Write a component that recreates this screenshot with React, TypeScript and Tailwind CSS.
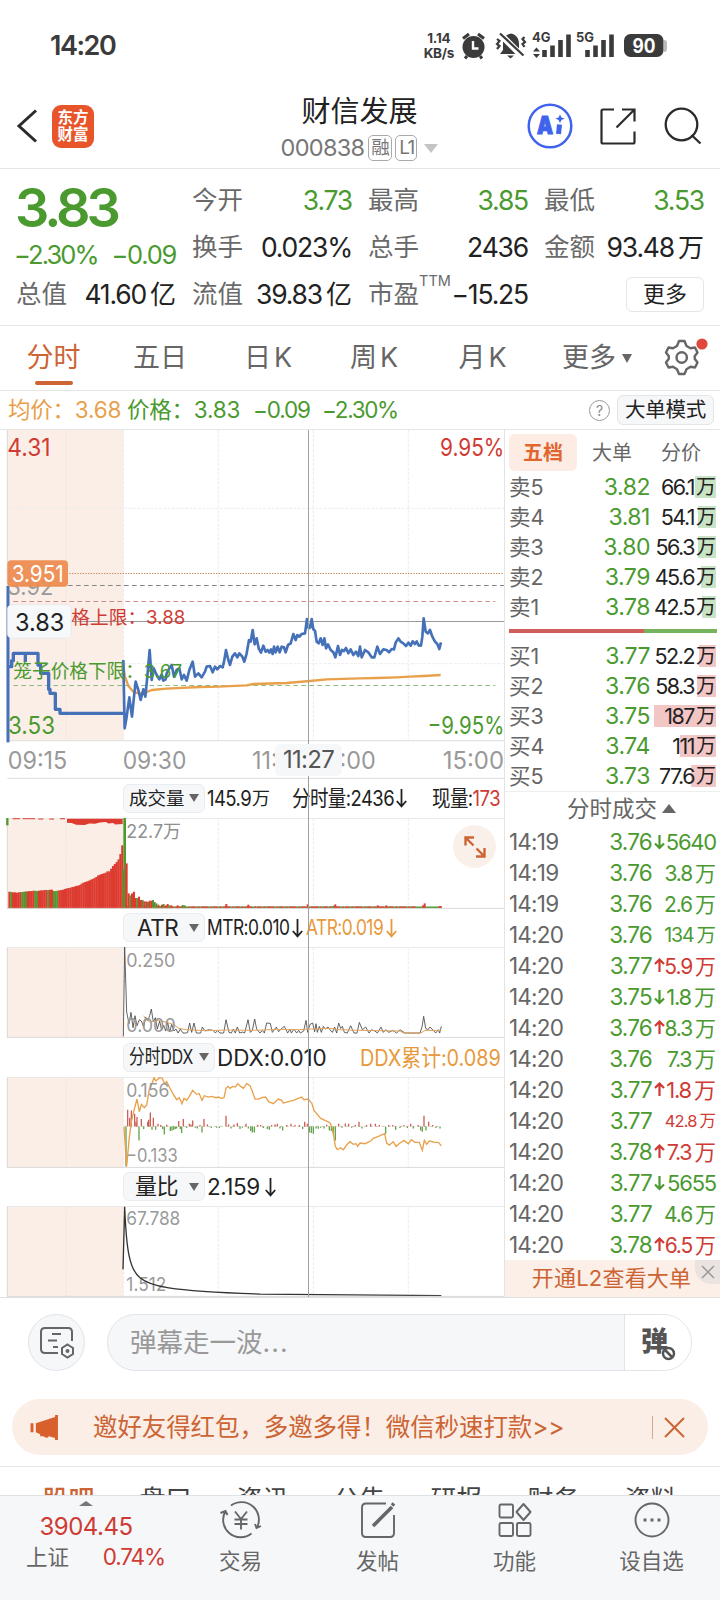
import type { ReactNode } from 'react';

const GREEN = '#4a9a2f';
const RED = '#cf3b34';
const BLUE = '#4471b8';
const ORANGE = '#e8a04a';

interface Level {
  label: string;
  price: string;
  volume: string;
  bar: number;
}

const SELLS: Level[] = [
  { label: '卖5', price: '3.82', volume: '66.1', bar: 21 },
  { label: '卖4', price: '3.81', volume: '54.1', bar: 18 },
  { label: '卖3', price: '3.80', volume: '56.3', bar: 18 },
  { label: '卖2', price: '3.79', volume: '45.6', bar: 15 },
  { label: '卖1', price: '3.78', volume: '42.5', bar: 14 },
];

const BUYS: Level[] = [
  { label: '买1', price: '3.77', volume: '52.2', bar: 17 },
  { label: '买2', price: '3.76', volume: '58.3', bar: 19 },
  { label: '买3', price: '3.75', volume: '187', bar: 62 },
  { label: '买4', price: '3.74', volume: '111', bar: 36 },
  { label: '买5', price: '3.73', volume: '77.6', bar: 25 },
];

interface Trade {
  time: string;
  price: string;
  dir?: 'up' | 'down';
  volume: string;
  unit?: string;
  size?: string;
  red?: boolean;
}

const TRADES: Trade[] = [
  { time: '14:19', price: '3.76', dir: 'down', volume: '5640', size: 'text-[22px]' },
  { time: '14:19', price: '3.76', volume: '3.8', unit: '万' },
  { time: '14:19', price: '3.76', volume: '2.6', unit: '万' },
  { time: '14:20', price: '3.76', volume: '134', unit: '万', size: 'text-[19.5px]' },
  { time: '14:20', price: '3.77', dir: 'up', volume: '5.9', unit: '万', red: true },
  { time: '14:20', price: '3.75', dir: 'down', volume: '1.8', unit: '万', size: 'text-[22px]' },
  { time: '14:20', price: '3.76', dir: 'up', volume: '8.3', unit: '万' },
  { time: '14:20', price: '3.76', volume: '7.3', unit: '万', size: 'text-[21.5px]' },
  { time: '14:20', price: '3.77', dir: 'up', volume: '1.8', unit: '万', size: 'text-[22px]', red: true },
  { time: '14:20', price: '3.77', volume: '42.8', unit: '万', size: 'text-[16.5px]', red: true },
  { time: '14:20', price: '3.78', dir: 'up', volume: '7.3', unit: '万', size: 'text-[21.5px]', red: true },
  { time: '14:20', price: '3.77', dir: 'down', volume: '5655', size: 'text-[22px]' },
  { time: '14:20', price: '3.77', volume: '4.6', unit: '万' },
  { time: '14:20', price: '3.78', dir: 'up', volume: '6.5', unit: '万', red: true },
];

// Chart coordinates are in thirds of a pixel
const PRICE_LINE =
  '370,720 374,925 380,890 388,832 396,890 402,830 407,785 415,810 422,840 430,808 436,830 442,770 449,690 455,780 461,745 470,765 478,778 484,765 490,782 497,778 500,760 508,745 515,735 522,770 530,750 538,745 545,778 552,765 560,782 568,750 578,725 585,770 595,760 605,772 615,755 620,740 630,738 638,757 645,740 652,748 660,738 668,742 672,725 678,690 685,720 690,735 697,710 705,700 712,712 718,700 727,710 733,725 740,700 747,660 752,665 758,630 764,673 770,655 776,685 783,698 790,677 797,695 803,690 808,698 813,688 818,702 822,680 827,697 833,680 839,697 845,680 852,682 857,697 864,675 872,670 880,642 887,660 892,645 898,650 905,642 915,640 921,597 926,625 931,622 935,597 940,628 945,632 950,665 956,670 962,655 968,675 973,655 978,685 984,673 992,690 1000,697 1006,712 1014,678 1020,705 1026,690 1032,693 1038,684 1045,700 1052,688 1060,705 1068,695 1075,708 1080,680 1085,712 1095,690 1105,697 1115,712 1123,712 1132,680 1140,702 1150,688 1160,690 1167,697 1175,687 1182,688 1187,668 1195,655 1202,665 1210,670 1218,678 1225,668 1232,677 1238,664 1245,672 1250,664 1256,676 1263,677 1267,650 1271,595 1277,635 1284,640 1290,630 1297,650 1305,665 1312,672 1318,687 1323,667';
const AVG_LINE =
  '370,735 375,770 385,798 400,815 415,820 435,818 455,810 500,806 600,801 655,800 740,796 760,792 860,789 930,783 980,778 1080,775 1130,774 1190,772 1230,770 1270,768 1322,765';
const AUCTION_PATH =
  'M26,740 H35 V722 H40 V700 H114 V735 H122 V760 H146 V808 H150 V820 H166 V868 H180 V880 H370 M76,700 V726';

const MTR_LINE =
  '370,268 374,0 380,195 387,230 393,196 399,242 405,206 411,236 418,218 424,222 431,240 437,210 443,222 449,206 454,186 460,225 466,212 472,246 479,222 485,250 491,235 497,252 503,226 509,255 515,232 522,252 528,246 534,258 541,246 549,258 558,258 563,256 569,228 575,256 582,228 589,258 602,258 607,240 615,252 625,248 640,250 646,258 653,250 660,258 671,258 678,218 687,256 694,258 700,246 706,258 712,240 719,258 728,255 734,258 744,218 751,256 757,250 764,216 770,246 780,258 787,250 793,258 800,228 811,229 817,256 829,240 836,254 843,246 853,238 863,258 870,246 874,258 882,246 890,258 896,250 901,258 911,252 918,220 923,256 930,232 938,228 944,254 948,230 952,256 958,238 964,256 970,238 976,246 984,240 990,248 997,256 1004,240 1010,258 1016,228 1022,244 1027,238 1033,256 1042,258 1052,236 1062,258 1071,258 1078,226 1087,248 1097,240 1107,258 1115,248 1125,252 1132,258 1143,240 1150,256 1157,248 1167,256 1178,250 1190,258 1200,248 1215,258 1260,258 1266,240 1271,208 1277,244 1284,248 1290,240 1300,250 1307,258 1315,248 1319,258 1324,238';
const ATR_LINE =
  '431,206 440,220 455,224 475,220 500,226 520,232 537,244 560,248 620,251 680,249 760,250 830,247 900,248 930,246 990,244 1020,248 1080,250 1200,252 1210,258 1262,258 1275,250 1324,250';
const DDX_SUM_LINE =
  '372,150 380,268 388,180 395,130 402,100 411,66 418,104 424,82 433,92 440,84 448,36 455,22 462,2 468,12 478,2 487,4 494,20 500,14 508,30 518,48 530,68 538,62 546,80 552,64 560,70 568,58 578,40 590,52 598,50 606,70 613,56 625,60 635,58 648,62 655,60 664,64 672,62 678,34 684,28 690,34 698,28 706,30 713,20 722,28 730,34 740,20 750,26 756,40 765,66 775,66 785,62 797,60 806,74 820,80 835,66 845,70 850,78 865,74 880,70 905,60 912,68 925,66 936,80 942,100 962,124 980,132 990,138 996,150 1000,170 1006,208 1012,218 1022,212 1030,218 1040,204 1050,194 1060,202 1068,200 1073,208 1080,198 1095,200 1112,192 1120,184 1130,180 1140,176 1154,170 1160,198 1168,204 1180,194 1188,208 1200,198 1212,190 1225,200 1234,188 1245,196 1258,196 1267,220 1273,190 1280,202 1288,192 1305,196 1315,196 1324,206';

// [x, height], negative heights hang under the zero line
const DDX_BARS: [number, number][] = [
  [378, -120], [383, 50], [389, 26], [394, 48], [404, 38], [408, 14], [411, 28], [417, -42], [424, 22], [431, -8], [443, 14], [446, 20], [451, 42], [456, -10], [460, 26], [467, -10], [474, 8], [482, 4], [488, -8], [493, -24], [500, 5], [511, -14], [516, -12], [521, -10], [526, -8], [530, -6], [536, 16], [541, -8], [545, -20], [550, 22], [560, -5], [568, 8], [573, 6], [578, 18], [586, -4], [592, -6], [600, 4], [606, -18], [612, 22], [622, 6], [634, -5], [650, -4], [658, -5], [678, 32], [686, 6], [693, -6], [702, 6], [712, 10], [720, -8], [727, -4], [738, 8], [745, -6], [752, -14], [757, -18], [763, -18], [773, 5], [782, 4], [790, -5], [802, -8], [808, -10], [815, 4], [825, 6], [832, 8], [840, -6], [848, -12], [860, 4], [873, 8], [885, 4], [898, 4], [908, -8], [914, 14], [922, 8], [928, -18], [934, -20], [940, -22], [948, -6], [955, -7], [962, -4], [972, -6], [980, 5], [988, -12], [994, -14], [1000, -22], [1006, -42], [1016, 8], [1026, -4], [1036, 9], [1046, 8], [1055, -4], [1066, 4], [1077, 14], [1086, -6], [1100, 4], [1112, 8], [1126, 8], [1138, 4], [1157, -22], [1166, 4], [1178, 4], [1187, -10], [1200, -5], [1212, 4], [1222, -5], [1232, 8], [1240, -6], [1254, 4], [1262, -12], [1267, -16], [1272, 32], [1278, -12], [1286, 14], [1298, 4], [1308, -5], [1320, -6],
];

// Opening auction volume: top edge of each bar
const AUCTION_VOLUME = [
  221, 222, 223, 223, 224, 223, 222, 222, 221, 220, 220, 219, 219, 218, 218, 219, 218, 217, 217, 216, 216, 216, 215, 215, 219, 219, 218, 217, 216, 215, 213, 211, 210, 209, 207, 206, 204, 203, 201, 197, 194, 192, 190, 188, 185, 183, 180, 177, 172, 170, 168, 166, 164, 160, 160, 152, 144, 138, 132, 124, 108, 82,
];
const AUCTION_GREEN = [1, 7, 8, 9, 14, 15, 21, 24, 25, 26];
const OPEN_VOLUME: [number, number, boolean][] = [
  [383, 226, false], [388, 232, true], [393, 226, false], [399, 221, false], [404, 240, false], [409, 240, true], [414, 236, false], [420, 246, false], [425, 246, true], [430, 250, false], [436, 250, false], [441, 252, true], [446, 248, false], [451, 248, false], [456, 246, true], [461, 252, true], [466, 256, true], [472, 260, false], [477, 264, true], [483, 260, false], [488, 258, true], [494, 262, false], [500, 258, false], [505, 262, true], [511, 262, false], [530, 262, false], [545, 261, true], [551, 262, true], [676, 258, false], [742, 260, false], [920, 259, false], [997, 263, true], [1003, 259, false], [1130, 262, false], [1156, 262, false], [1266, 262, false], [1271, 256, false],
];

/* Svg text stretched to an exact width */
function Label({ x, y, w, size, fill, children }: { x: number; y: number; w: number; size: number; fill: string; children: ReactNode }) {
  return (
    <text x={x} y={y} fontSize={size} fill={fill} textLength={w} lengthAdjust="spacingAndGlyphs">
      {children}
    </text>
  );
}

function Grid({ top, bottom }: { top: number; bottom: number }) {
  return (
    <>
      <rect x={22} y={top} width={348} height={bottom - top} fill="#fbeee7" />
      <path d={`M22,${top} V${bottom}`} stroke="#ddd5d3" strokeWidth={3} />
      <path
        d={`M199,${top} V${bottom} M370,${top} V${bottom} M655,${top} V${bottom} M940,${top} V${bottom} M1225,${top} V${bottom}`}
        stroke="#e6e4e4"
        strokeWidth={2}
        strokeDasharray="10 4"
      />
    </>
  );
}

function MainChart() {
  return (
    <svg className="block h-[311px] w-[504px] overflow-visible" viewBox="0 30 1512 933" fill="none">
      <Grid top={30} bottom={963} />
      <path d="M22,265 H1512 M22,731 H1512" stroke="#ececec" strokeWidth={3} strokeDasharray="9 4" />
      <path d="M22,962 H1512" stroke="#e3e3e3" strokeWidth={4} />
      <path d="M200,460.5 H1512" stroke="#c98a5c" strokeWidth={3} strokeDasharray="4 4" />
      <path d="M36,496.500 H1512" stroke="#858585" strokeWidth={3} strokeDasharray="14 10" />
      <path d="M40,544.500 H1486" stroke="#cf8a8a" strokeWidth={3} strokeDasharray="14 10" />
      <path d="M40,796.500 H1486" stroke="#8dba80" strokeWidth={3} strokeDasharray="14 10" />
      <path d="M210,604.500 H1512" stroke="#999" strokeWidth={3} />
      <polyline points={AVG_LINE} stroke={ORANGE} strokeWidth={7} strokeLinejoin="round" />
      <path d={AUCTION_PATH} stroke={BLUE} strokeWidth={10} strokeLinejoin="round" />
      <path d="M24,498 V967" stroke={BLUE} strokeWidth={9} />
      <polyline points={PRICE_LINE} stroke={BLUE} strokeWidth={8} strokeLinejoin="round" />
      <Label x={40} y={773} w={506} size={57} fill={GREEN}>笼子价格下限：3.67</Label>
      <Label x={214} y={611} w={342} size={56} fill={RED}>格上限：3.88</Label>
      <Label x={22} y={107} w={130} size={72} fill={RED}>4.31</Label>
      <Label x={1320} y={107} w={193} size={72} fill={RED}>9.95%</Label>
      <Label x={24} y={941} w={141} size={72} fill={GREEN}>3.53</Label>
      <Label x={1283} y={941} w={230} size={72} fill={GREEN}>−9.95%</Label>
      <Label x={22} y={524} w={138} size={68} fill="#999">3.92</Label>
      <rect x={22} y={421} width={182} height={79} rx={12} fill="#ee8c50" fillOpacity={0.94} />
      <Label x={35} y={486} w={156} size={70} fill="#fff">3.951</Label>
      <rect x={22} y={554} width={192} height={101} rx={14} fill="#f6f8fa" stroke="#e2e5ea" strokeWidth={2} />
      <Label x={45} y={632} w={148} size={74} fill="#222">3.83</Label>
    </svg>
  );
}

function TimeAxis() {
  return (
    <svg className="block h-[38px] w-[504px] overflow-visible" viewBox="0 963 1512 114" fill="none">
      <Label x={23} y={1046} w={179} size={74} fill="#999">09:15</Label>
      <Label x={368} y={1046} w={191} size={74} fill="#999">09:30</Label>
      <Label x={756} y={1046} w={371} size={74} fill="#999">11:30/13:00</Label>
      <Label x={1328} y={1046} w={184} size={74} fill="#999">15:00</Label>
      <path d="M22,1075 H1512" stroke="#ddd" strokeWidth={3} />
    </svg>
  );
}

function Indicator({ header, children }: { header: ReactNode; children: ReactNode }) {
  return (
    <div>
      <div className="flex h-[38.75px] items-center pl-[123px] whitespace-nowrap">{header}</div>
      <svg className="block h-[90.75px] w-[504px] overflow-hidden" viewBox="0 0 1512 272" fill="none">
        <Grid top={0} bottom={272} />
        <path d="M22,1.5 H1512" stroke="#e9e9e9" strokeWidth={3} />
        {children}
        <path d="M22,271 H1512" stroke="#dadada" strokeWidth={3} />
      </svg>
    </div>
  );
}

function Picker({ width, children }: { width: string; children: ReactNode }) {
  return (
    <div className={`flex h-[29px] shrink-0 items-center justify-between rounded-md border border-[#e9ecf0] bg-[#f6f7f9] px-[5px] text-[#222] ${width}`}>
      {children}
      <svg className="h-2 w-[10px] shrink-0" viewBox="0 0 10 8"><path d="M0,0 H10 L5,8 Z" fill="#666" /></svg>
    </div>
  );
}

/* Condensed run of text: fixed box, glyphs scaled down to fit it */
function Squeeze({ width, scale, children }: { width: string; scale: string; children: ReactNode }) {
  return (
    <span className={`inline-block shrink-0 ${width}`}>
      <span className={`inline-block origin-left ${scale}`}>{children}</span>
    </span>
  );
}

function DownArrow() {
  return (
    <svg className="h-5 w-[11px] shrink-0" viewBox="0 0 11 20" fill="none" stroke="currentColor" strokeWidth={1.8}>
      <path d="M5.5,1 V18 M0.8,13 L5.5,18.3 L10.2,13" />
    </svg>
  );
}

function VolumeChart() {
  return (
    <>
      {AUCTION_VOLUME.map((top, i) => (
        <rect key={i} x={25 + i * 5.55} y={top} width={6.5} height={272 - top} fill={AUCTION_GREEN.includes(i) ? '#5b9232' : '#dd3b30'} />
      ))}
      <path d="M201,2 H368 V18 L345,19 L340,15 L325,16 L318,12 L300,13 L285,17 L268,16 L254,21 L228,20 L215,15 L201,14 Z" fill="#dd3b30" />
      <path d="M38,2 H60 M68,2 H105 M115,3 H130 M148,3 H162 M180,2 H195" stroke="#dd3b30" strokeWidth={3} />
      <path d="M22,0 V22" stroke={GREEN} strokeWidth={7} />
      <path d="M374,0 V272" stroke="#4d9a2e" strokeWidth={8} />
      <rect x={366} y={154} width={8} height={118} fill="#77822f" />
      <rect x={376} y={136} width={7} height={136} fill="#dd3b30" />
      <path d="M370,268 H1325" stroke={GREEN} strokeWidth={5} />
      <path d="M375,268 H1250" stroke="#dd3b30" strokeWidth={5} strokeDasharray="14 5 7 4 22 6 5 3" />
      {OPEN_VOLUME.map(([x, top, up]) => (
        <rect key={x} x={x} y={top} width={6} height={272 - top} fill={up ? '#5b9232' : '#dd3b30'} />
      ))}
      <path d="M1316,267 H1325" stroke="#dd3b30" strokeWidth={6} />
      <Label x={379} y={60} w={164} size={56} fill="#8f8f8f">22.7万</Label>
    </>
  );
}

function Row({ row, tint }: { row: Level; tint: string }) {
  return (
    <div className="flex h-[30px] items-center pt-px pr-1 pl-1">
      <span className="w-[60px] text-[21.5px] text-[#666]">{row.label}</span>
      <span className="w-[81px] text-right text-[23px] tracking-[-0.02em] text-[#4a9a2f]">{row.price}</span>
      <div className="relative flex h-[22px] flex-1 items-center justify-end text-[21.5px] text-[#222]">
        <div className={`absolute top-0 right-0 h-full ${tint}`} style={{ width: row.bar }} />
        <span className="relative tracking-[-0.07em]">{row.volume}</span>
        <span className="relative ml-[2px] text-[20px]">万</span>
      </div>
    </div>
  );
}

function TradeRow({ trade }: { trade: Trade }) {
  return (
    <div className="flex h-[31px] items-center pt-px pl-1">
      <span className="w-[62px] text-[22.5px] tracking-[-0.035em] text-[#666]">{trade.time}</span>
      <span className="w-[81px] text-right text-[22.5px] tracking-[-0.035em] text-[#4a9a2f]">{trade.price}</span>
      <svg className="mr-px ml-[2px] h-4 w-[11px]" viewBox="0 0 11 16" fill="none" strokeWidth={2.2} stroke={trade.dir === 'up' ? RED : GREEN}>
        {trade.dir === 'up' && <path d="M5.5,14 V1 M1,6 L5.5,1.5 L10,6" />}
        {trade.dir === 'down' && <path d="M5.5,1 V14 M1,9.5 L5.5,14 L10,9.5" />}
      </svg>
      <span className={`flex w-[50px] items-center justify-end tracking-[-0.055em] ${trade.size ?? 'text-[21px]'} ${trade.red ? 'text-[#cf3b34]' : 'text-[#4a9a2f]'}`}>
        {trade.volume}
        {trade.unit && <span className="ml-[3px] tracking-normal">{trade.unit}</span>}
      </span>
    </div>
  );
}

function StatusBar() {
  return (
    <div className="flex h-[84px] items-center pt-2 pr-[53px] pl-[50px] text-[#3b3b3b]">
      <span className="flex-1 pt-px text-[27px] font-semibold tracking-[-0.055em]">14:20</span>
      <div className="mr-[9px] text-center text-[13.5px] leading-[15.5px] font-bold tracking-[-0.02em]">
        <div>1.14</div>
        <div>KB/s</div>
      </div>
      <svg className="h-[26px] w-[201px] overflow-visible" viewBox="463 33 201 26" fill="none">
        {/* alarm */}
        <circle cx={473.5} cy={47} r={11} fill="#3b3b3b" />
        <path d="M463,38.5 L469,34 M484,38.5 L478,34 M467,56 L465,58.5 M480,56 L482,58.5" stroke="#3b3b3b" strokeWidth={3} />
        <path d="M473,41 V48.5 H478.5" stroke="#fff" strokeWidth={2.4} />
        {/* muted bell */}
        <path d="M503,50 V44 C503,38 506,34.500 511,33.500 C516,34.500 519,38 519,44 V50 L522,54 H500 Z M507,55.500 H514 L510.500,58.500 Z" fill="#3b3b3b" />
        <path d="M500,34 L523,57" stroke="#fff" strokeWidth={6.500} />
        <path d="M500,33.500 L523.500,55.500" stroke="#3b3b3b" strokeWidth={2.200} />
        <path d="M497,39 L499.500,41 L497,44 L499.500,46 L497,49 M524.500,37 L522.500,39 L525,42 L522.500,44 L524.500,47" stroke="#3b3b3b" strokeWidth={2.200} />
        {/* signals */}
        <path d="M544.500,57 V50 M552.500,57 V45.500 M560.500,57 V40 M568.500,57 V34.500" stroke="#3b3b3b" strokeWidth={4.600} />
        <path d="M533,51.500 L536.500,47.500 L540,51.500 Z M533,54 L536.500,58 L540,54 Z" fill="#3b3b3b" />
        <path d="M587.500,57 V50 M595.500,57 V45.500 M603.500,57 V40 M611.500,57 V34.500" stroke="#3b3b3b" strokeWidth={4.600} />
        <text x={532} y={42} fontSize={13.5} fontWeight={700} fill="#3b3b3b" textLength={18.500} lengthAdjust="spacingAndGlyphs">4G</text>
        <text x={576} y={42} fontSize={13.5} fontWeight={700} fill="#3b3b3b" textLength={18} lengthAdjust="spacingAndGlyphs">5G</text>
        {/* battery */}
        <rect x={624} y={34} width={39.500} height={23} rx={6.500} fill="#3b3b3b" />
        <text x={632.500} y={52.500} fontSize={19.500} fontWeight={700} fill="#fff" textLength={23} lengthAdjust="spacingAndGlyphs">90</text>
      </svg>
      <div className="h-3 w-[3px] rounded-r bg-[#bbb]" />
    </div>
  );
}

function Header() {
  return (
    <div className="flex h-[85px] items-center border-b border-[#e6e6e6] pr-[18px] pl-[16px]">
      <svg className="h-[34px] w-[22px]" viewBox="0 0 22 34" fill="none" stroke="#2b2b2b" strokeWidth={3}>
        <path d="M20,1.500 L3,17 L20,32.500" />
      </svg>
      <div className="ml-[14px] flex h-[43px] w-[42px] flex-col items-center justify-center rounded-[9px] bg-[#e8552b] text-[15.500px] leading-[17px] font-bold text-white">
        <span>东方</span>
        <span>财富</span>
      </div>
      <div className="flex flex-1 flex-col items-center pt-[6px] pl-[98px]">
        <div className="text-[29px] leading-[38px] text-[#222]">财信发展</div>
        <div className="flex h-[34px] items-center gap-[3px] text-[23.500px] tracking-[-0.03em] text-[#777]">
          000838
          <span className="ml-px flex h-[26px] w-[24px] items-center justify-center rounded-[5px] border border-[#aaa] text-[18.500px] tracking-normal">融</span>
          <span className="flex h-[26px] w-[22px] items-center justify-center rounded-[5px] border border-[#aaa] text-[19px] tracking-[-0.08em]">L1</span>
          <svg className="ml-[4px] h-[9px] w-[14px]" viewBox="0 0 14 9"><path d="M0,0 H14 L7,9 Z" fill="#c4c4c4" /></svg>
        </div>
      </div>
      <svg className="h-[46px] w-[175px]" viewBox="527 103.500 175 46" fill="none">
        <circle cx={550} cy={126.500} r={21.300} stroke="#3f63ec" strokeWidth={2.500} />
        <text x={537} y={134.500} fontSize={24} fontWeight={900} fill="#3f63ec" stroke="#3f63ec" strokeWidth={1.200} textLength={16} lengthAdjust="spacingAndGlyphs">A</text>
        <path d="M559.500,125 L558.500,134.500" stroke="#3f63ec" strokeWidth={5} />
        <path d="M560,115 L561.500,118 L564.500,119 L561.500,120.500 L560,123.500 L558.500,120.500 L555.500,119 L558.500,118 Z" fill="#3f63ec" />
        <path d="M614,110 H603 Q601.500,110 601.500,111.500 V142.500 Q601.500,144 603,144 H633 Q634.500,144 634.500,142.500 V132 M622,110 H634.500 V122 M634.500,110 L616.500,128" stroke="#2b2b2b" strokeWidth={2.200} />
        <circle cx={681.500} cy={125} r={15.800} stroke="#2b2b2b" strokeWidth={2.300} />
        <path d="M691.500,135.500 L700.500,144" stroke="#2b2b2b" strokeWidth={2.300} />
      </svg>
    </div>
  );
}

function Stat({ label, value, unit, green, sup }: { label: string; value: string; unit?: string; green?: boolean; sup?: string }) {
  return (
    <div className="flex h-[47px] items-center justify-between">
      <span className="relative text-[25.5px] text-[#6a6a6a]">
        {label}
        {sup && <sup className="absolute -top-[1px] left-full text-[14.5px] leading-none">{sup}</sup>}
      </span>
      <span className={`text-[26.500px] tracking-[-0.045em] whitespace-nowrap ${green ? 'text-[#4a9a2f]' : 'text-[#222]'}`}>
        {value}
        {unit && <span className="ml-[4px] text-[26px] tracking-normal">{unit}</span>}
      </span>
    </div>
  );
}

function Quote() {
  return (
    <div className="grid h-[157px] grid-cols-[160px_160px_160px_160px] gap-x-4 border-b border-[#e6e6e6] pt-[8px] pl-[16px]">
      <div>
        <div className="flex h-[94px] flex-col">
          <div className="-ml-px h-[60px] text-[54px] leading-[61px] font-semibold tracking-[-0.075em] text-[#4a9a2f]">3.83</div>
          <div className="flex justify-between pt-[4px] text-[25.5px] leading-[28px] text-[#4a9a2f]">
            <span className="-ml-[2px] tracking-[-0.075em]">−2.30%</span>
            <span className="tracking-[-0.05em]">−0.09</span>
          </div>
        </div>
        <Stat label="总值" value="41.60" unit="亿" />
      </div>
      <div>
        <Stat label="今开" value="3.73" green />
        <Stat label="换手" value="0.023%" />
        <Stat label="流值" value="39.83" unit="亿" />
      </div>
      <div>
        <Stat label="最高" value="3.85" green />
        <Stat label="总手" value="2436" />
        <Stat label="市盈" sup="TTM" value="−15.25" />
      </div>
      <div>
        <Stat label="最低" value="3.53" green />
        <Stat label="金额" value="93.48" unit="万" />
        <div className="flex h-[47px] items-center justify-end">
          <div className="flex h-[35px] w-[78px] items-center justify-center rounded-md border border-[#e6e6e6] text-[22px] text-[#222]">更多</div>
        </div>
      </div>
    </div>
  );
}

function Tabs() {
  return (
    <div className="flex h-[65px] items-center border-b border-[#e6e6e6] text-[27px] text-[#666]">
      <div className="relative flex h-full w-[107px] items-center justify-center text-[#cc6434]">
        分时
        <div className="absolute bottom-[5px] h-1 w-[38px] rounded-full bg-[#cc6434]" />
      </div>
      <div className="w-[106px] text-center">五日</div>
      <div className="w-[110px] text-center">日<span className="ml-[3px]">K</span></div>
      <div className="w-[102px] text-center">周<span className="ml-[3px]">K</span></div>
      <div className="w-[115px] text-center">月<span className="ml-[3px]">K</span></div>
      <div className="ml-[22px] flex items-center">
        更多
        <svg className="ml-[6px] h-[9px] w-[10px]" viewBox="0 0 10 9"><path d="M0,0 H10 L5,9 Z" fill="#666" /></svg>
      </div>
      <svg className="ml-[31px] h-[44px] w-[46px]" viewBox="663 337 46 44" fill="none">
        <path
          d="M679,342 H684.500 L686.500,347 L690.500,349.200 L695,348.500 L697.500,353.500 L694.700,357.300 V359.700 L697.500,363.500 L695,368.500 L690.500,367.800 L686.500,370.200 L684.500,375 H679 L677,370.200 L673,367.800 L668.500,368.500 L666,363.500 L668.800,359.700 V357.300 L666,353.500 L668.500,348.500 L673,349.200 L677,347 Z"
          stroke="#666"
          strokeWidth={2.400}
          strokeLinejoin="round"
        />
        <circle cx={681.700} cy={358.500} r={5.200} stroke="#666" strokeWidth={2.400} />
        <circle cx={702} cy={345} r={5.600} fill="#e0483e" />
      </svg>
    </div>
  );
}

function InfoBar() {
  return (
    <div className="flex h-[39px] items-center border-b border-[#e6e6e6] pr-[6px] pl-[8px] text-[22.5px] tracking-[-0.01em] text-[#4a9a2f]">
      <span className="w-[119px] text-[#e8a04a]">均价：3.68</span>
      <span className="w-[126px]">价格：3.83</span>
      <span className="w-[69px] tracking-[-0.05em]">−0.09</span>
      <span className="tracking-[-0.06em]">−2.30%</span>
      <div className="ml-auto flex h-[21px] w-[21px] items-center justify-center rounded-full border-[1.500px] border-[#999] text-[14px] text-[#888]">?</div>
      <div className="ml-[7px] flex h-[30px] w-[97px] items-center justify-center rounded-md border border-[#e2e5ea] bg-[#f6f7f9] text-[20.5px] text-[#222]">大单模式</div>
    </div>
  );
}

function ChartColumn() {
  return (
    <div className="relative w-[505px] border-r border-[#e3e3e3]">
      <MainChart />
      <TimeAxis />
      <Indicator
        header={
          <div className="flex items-center text-[22px] tracking-[-0.03em] text-[#222]">
            <Picker width="w-[82px]"><span className="text-[18.500px] tracking-normal">成交量</span></Picker>
            <span className="ml-[2px] flex w-[85px] items-center">
              <Squeeze width="w-[45px]" scale="scale-x-[0.84]">145.9</Squeeze>
              <span className="text-[18px]">万</span>
            </span>
            <Squeeze width="w-[104px]" scale="scale-x-[0.84]">分时量:2436</Squeeze>
            <DownArrow />
            <span className="ml-[25px]"><Squeeze width="w-[70px]" scale="scale-x-[0.84]">现量:<span className="text-[#cf3b34]">173</span></Squeeze></span>
          </div>
        }
      >
        <VolumeChart />
      </Indicator>
      <Indicator
        header={
          <div className="flex items-center text-[22px] tracking-[-0.03em] text-[#222]">
            <Picker width="w-[82px]"><span className="pl-[8px] text-[22.500px] tracking-[-0.02em]">ATR</span></Picker>
            <span className="ml-[2px]"><Squeeze width="w-[85px]" scale="scale-x-[0.79]">MTR:0.010</Squeeze></span>
            <DownArrow />
            <span className="ml-[3px] flex items-center text-[#e8993c]">
              <Squeeze width="w-[80px]" scale="scale-x-[0.79]">ATR:0.019</Squeeze>
              <DownArrow />
            </span>
          </div>
        }
      >
        <polyline points={MTR_LINE} stroke="#444" strokeWidth={2.500} />
        <polyline points={ATR_LINE} stroke="#e3a45a" strokeWidth={3} />
        <Label x={379} y={59} w={147} size={56} fill="#999">0.250</Label>
        <Label x={379} y={254} w={148} size={56} fill="#999">0.000</Label>
      </Indicator>
      <Indicator
        header={
          <div className="flex items-center text-[22.500px] tracking-[-0.005em] text-[#222]">
            <Picker width="w-[92px]"><span className="text-[20.500px]"><Squeeze width="w-[65px]" scale="scale-x-[0.77]">分时DDX</Squeeze></span></Picker>
            <span className="ml-[2px] w-[143px]">DDX:0.010</span>
            <span className="text-[#e8993c]"><Squeeze width="w-[142px]" scale="scale-x-[0.885]">DDX累计:0.089</Squeeze></span>
          </div>
        }
      >
        <path d="M372,148 H1325" stroke="#b9a78f" strokeWidth={2} strokeDasharray="8 10" />
        {DDX_BARS.map(([x, h]) => (
          <path key={x} d={`M${x},148 v${-h}`} stroke={h > 0 ? '#cd5f58' : '#62a44b'} strokeWidth={4} />
        ))}
        <polyline points={DDX_SUM_LINE} stroke="#e8a04a" strokeWidth={4} />
        <Label x={379} y={60} w={129} size={56} fill="#999">0.156</Label>
        <Label x={378} y={255} w={155} size={56} fill="#999">−0.133</Label>
      </Indicator>
      <Indicator
        header={
          <div className="flex items-center text-[22.500px] tracking-[-0.02em] text-[#222]">
            <Picker width="w-[82px]"><span className="pl-[6px] text-[22px]">量比</span></Picker>
            <span className="mr-[5px] ml-[2px]">2.159</span>
            <DownArrow />
          </div>
        }
      >
        <Label x={379} y={58} w={162} size={56} fill="#999">67.788</Label>
        <Label x={379} y={254} w={120} size={56} fill="#999">1.512</Label>
        <path d="M369,190 L374,2 C379,130 388,190 420,215 C450,240 500,255 780,264 L1324,269" stroke="#333" strokeWidth={4} />
      </Indicator>
      {/* crosshair */}
      <div className="absolute top-0 bottom-0 left-[308px] w-px bg-[#a0a0a0]" />
      <div className="absolute top-[314px] left-[275px] flex h-[32px] w-[67px] items-center justify-center rounded-md bg-[#f6f7f9] text-[24px] tracking-[-0.03em] text-[#555]">11:27</div>
      <div className="absolute top-[395px] left-[453px] flex h-[43px] w-[43px] items-center justify-center rounded-full bg-[#faf0ea]">
        <svg className="h-[22px] w-[22px]" viewBox="0 0 22 22" fill="none" stroke="#cc6434" strokeWidth={2.400}>
          <path d="M1.500,9.500 V1.500 H10 M1.500,1.500 L9.500,9.500 M20.500,12 V20.500 H12 M20.500,20.500 L12.500,12.500" />
        </svg>
      </div>
    </div>
  );
}

function OrderBook() {
  return (
    <div className="flex w-[215px] flex-col">
      <div className="flex h-[42px] items-center pt-[4px] pl-1 text-[20px] text-[#666]">
        <div className="flex h-[37px] w-[68px] items-center justify-center rounded-md bg-[#fcece4] font-bold text-[#e0662f]">五档</div>
        <div className="w-[70px] text-center">大单</div>
        <div className="w-[68px] text-center">分价</div>
      </div>
      {SELLS.map(row => <Row key={row.label} row={row} tint="bg-[#c9e4c4]" />)}
      <div className="flex h-[19px] items-center px-[3.500px]">
        <div className="h-1 w-[135px] bg-[#cd5f58]" />
        <div className="h-1 flex-1 bg-[#76b35e]" />
      </div>
      {BUYS.map(row => <Row key={row.label} row={row} tint="bg-[#f3c6c6]" />)}
      <div className="flex h-[36px] items-center justify-center border-t border-[#eee] pl-[18px] text-[22.500px] text-[#666]">
        分时成交
        <svg className="ml-[5px] h-[9px] w-[14px]" viewBox="0 0 14 9"><path d="M0,9 H14 L7,0 Z" fill="#666" /></svg>
      </div>
      {TRADES.map((trade, i) => <TradeRow key={i} trade={trade} />)}
      <div className="relative mt-auto flex h-[37px] items-center justify-center bg-[#fbefe8] text-[22px] text-[#cc6434]">
        <span className="pr-[2px] tracking-[0.01em]">开通L2查看大单</span>
        <div className="absolute top-0 right-0 flex h-[24px] w-[25px] items-center justify-center rounded-bl-2xl bg-[#ebe3df]">
          <svg className="h-[14px] w-[14px]" viewBox="0 0 14 14" stroke="#999" strokeWidth={1.500}><path d="M1,1 L13,13 M13,1 L1,13" /></svg>
        </div>
      </div>
    </div>
  );
}

function CommentBar() {
  return (
    <div className="flex h-[90px] items-center border-t border-[#e0e0e0] pl-[28px]">
      <div className="flex h-[57px] w-[57px] items-center justify-center rounded-full border border-[#e0e3e8] bg-[#f6f7f9]">
        <svg className="h-[34px] w-[36px]" viewBox="39 1327 36 34" fill="none" stroke="#666" strokeWidth={2}>
          <path d="M58,1354 H45 Q41,1354 41,1350 V1333 Q41,1329 45,1329 H68 Q72,1329 72,1333 V1342" />
          <path d="M52,1335 H61 M48,1341.500 H57 M53,1348 H58" />
          <path d="M67.500,1345.500 L73,1349 V1355 L67.500,1358.500 L62,1355 V1349 Z" />
          <circle cx={67.500} cy={1352} r={1} fill="#666" />
        </svg>
      </div>
      <div className="ml-[22px] flex h-[57px] w-[585px] items-center overflow-hidden rounded-full border border-[#e0e3e8] bg-[#f6f7f9]">
        <span className="flex-1 pl-[22px] text-[26.500px] text-[#999]">弹幕走一波<span className="tracking-[0.04em]">...</span></span>
        <div className="relative h-full w-[67px] border-l border-[#e0e3e8] bg-white">
          <span className="absolute top-[9px] left-[16px] text-[27px] leading-[36px] font-black text-[#555]">弹</span>
          <svg className="absolute top-[31px] left-[36px] h-[15px] w-[15px]" viewBox="0 0 15 15" fill="#fff" stroke="#555" strokeWidth={2.500}>
            <circle cx={7.500} cy={7.500} r={5.500} />
            <path d="M3.500,3.500 L11.500,11.500" />
          </svg>
        </div>
      </div>
    </div>
  );
}

function Promo() {
  return (
    <div className="h-[80px] border-b border-[#e6e6e6] px-[12px] pt-[12px]">
      <div className="flex h-[56px] items-center rounded-full bg-[#fbeee7] pr-[23px] pl-[18px] text-[24.500px] text-[#cc6434]">
        <svg className="h-[25px] w-[29px]" viewBox="0 0 29 26" fill="#d9602c">
          <path d="M0,8.500 H3 V18 H0 Z M5.500,8.500 L25.500,2 V0 H28.500 V26 H25.500 V24 L19,22 L17,24 L13,22 L10,22 V20 L5.500,18 Z" />
        </svg>
        <span className="ml-[34px] flex-1 whitespace-nowrap tracking-[-0.004em]">邀好友得红包，多邀多得！微信秒速打款&gt;&gt;</span>
        <div className="mr-[11px] h-[23px] w-px bg-[#dba78d]" />
        <svg className="h-[21px] w-[21px]" viewBox="0 0 21 21" stroke="#cc6434" strokeWidth={2}><path d="M1,1 L20,20 M20,1 L1,20" /></svg>
      </div>
    </div>
  );
}

const SECTIONS = ['股吧', '盘口', '资讯', '公告', '研报', '财务', '资料'];

function NavItem({ label, children }: { label: string; children: ReactNode }) {
  return (
    <div className="flex w-[137px] flex-col items-center pt-[5px]">
      <svg className="h-[38px] w-[40px] overflow-visible" viewBox="0 0 40 38" fill="none" stroke="#666" strokeWidth={1.900}>{children}</svg>
      <div className="mt-[7px] leading-[30px]">{label}</div>
    </div>
  );
}

function BottomNav() {
  return (
    <div className="flex h-[105px] border-t border-[#dfe1e4] bg-[#f6f7f9] text-[21.500px] text-[#666]">
      <div className="flex w-[172px] flex-col items-center pt-[5px]">
        <svg className="h-[5px] w-[14px]" viewBox="0 0 14 5"><path d="M0,5 L7,0 L14,5 Z" fill="#777" /></svg>
        <div className="mt-[5px] text-[24px] leading-[31px] tracking-[-0.02em] text-[#cf3b34]">3904.45</div>
        <div className="flex w-[158px] justify-between pl-[19px] leading-[30px]">
          <span>上证</span>
          <span className="text-[22.500px] tracking-[-0.05em] text-[#cf3b34]">0.74%</span>
        </div>
      </div>
      <NavItem label="交易">
        <path d="M4.500,10 A17.500,17.500 0 0 0 30.500,32.500 M10,4.500 A17.500,17.500 0 0 1 36,26.500 M-0.500,12 L4.500,10 L6.500,14 M40,25 L35.500,27 L34,23" />
        <path d="M14,10.500 L20,18 L26,10.500 M20,18 V28.500 M13.500,18.500 H26.500 M13.500,23 H26.500" />
      </NavItem>
      <NavItem label="发帖">
        <path d="M28,2.500 H8 Q4,2.500 4,6.500 V32 Q4,36 8,36 H32 Q36,36 36,32 V14" />
        <path d="M15,25 L34,6" strokeWidth={3.600} />
        <path d="M34,4.500 L36,2.500" strokeWidth={3.600} />
      </NavItem>
      <NavItem label="功能">
        <path d="M6,3.500 H16.500 Q18,3.500 18,5 V15 Q18,16.500 16.500,16.500 H6 Q4.500,16.500 4.500,15 V5 Q4.500,3.500 6,3.500 Z M6,22 H16.500 Q18,22 18,23.500 V33.500 Q18,35 16.500,35 H6 Q4.500,35 4.500,33.500 V23.500 Q4.500,22 6,22 Z M23.500,22 H34 Q35.500,22 35.500,23.500 V33.500 Q35.500,35 34,35 H23.500 Q22,35 22,33.500 V23.500 Q22,22 23.500,22 Z M28.500,3 L35.500,11 L28.500,19 L21.500,11 Z" strokeLinejoin="round" />
      </NavItem>
      <NavItem label="设自选">
        <circle cx={20} cy={19} r={16.500} />
        <path d="M11.500,19 H14.500 M18.500,19 H21.500 M25.500,19 H28.500" strokeWidth={3} />
      </NavItem>
    </div>
  );
}

export default function App() {
  return (
    <div className="flex h-[1600px] w-[720px] flex-col overflow-hidden bg-white font-['Inter','Noto_Sans_CJK_SC',sans-serif]">
      <StatusBar />
      <Header />
      <Quote />
      <Tabs />
      <InfoBar />
      <div className="flex h-[867px]">
        <ChartColumn />
        <OrderBook />
      </div>
      <CommentBar />
      <Promo />
      <div className="flex h-[28px] items-start overflow-hidden px-5 pt-[17px] text-[26px] leading-[32px] text-[#444]">
        {SECTIONS.map((name, i) => (
          <div key={name} className={`w-[97px] text-center ${i === 0 ? 'font-medium text-[#cc6434]' : ''}`}>{name}</div>
        ))}
      </div>
      <BottomNav />
    </div>
  );
}
